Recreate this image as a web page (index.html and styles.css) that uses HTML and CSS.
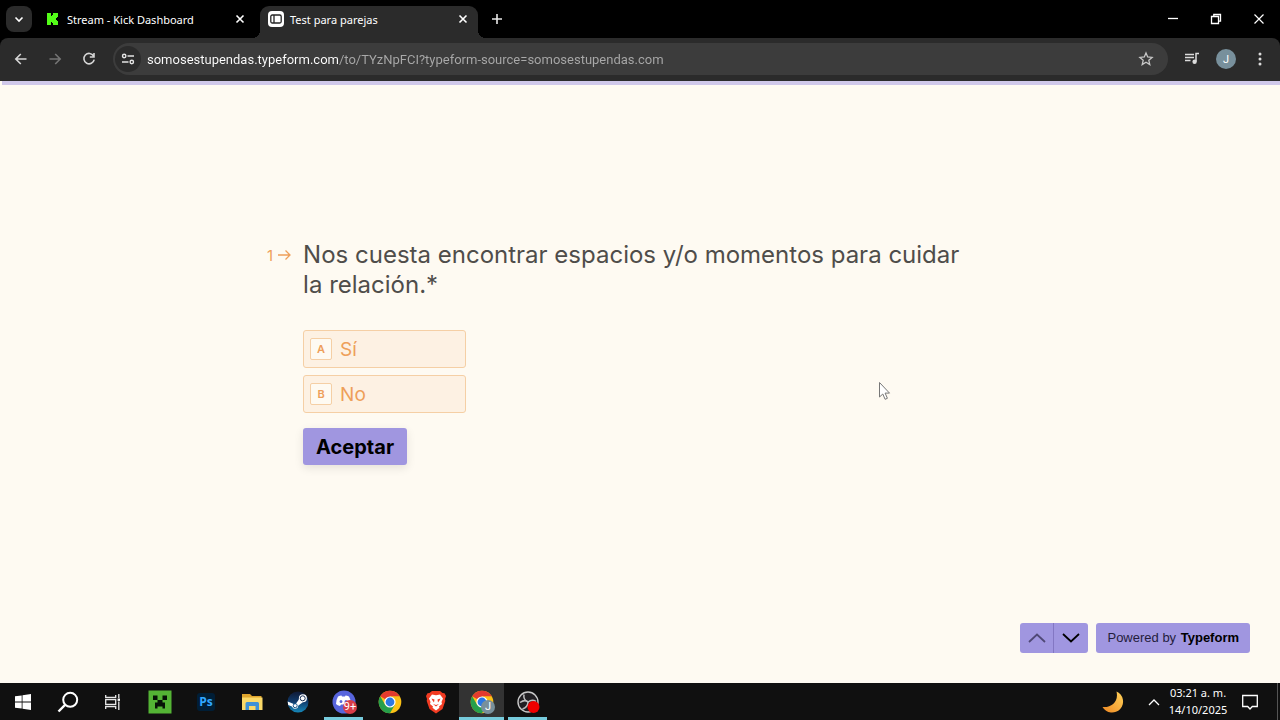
FILE: index.html
```html
<!DOCTYPE html>
<html lang="es">

<head>
  <meta charset="UTF-8">
  <meta name="viewport" content="width=device-width, initial-scale=1.0">
  <title>Test para parejas</title>
  <link rel="stylesheet" href="styles.css">
</head>

<body>
  <header class="browser">
    <div class="tab-strip">
      <button class="tab-search" aria-label="Buscar pestañas">
        <svg width="10" height="10" viewBox="0 0 10 10"><path d="M1.500 3.500l3.500 3.500 3.500-3.500" fill="none" stroke="#fff" stroke-width="1.6"/></svg>
      </button>
      <div class="tab">
        <svg class="tab-icon" width="16" height="16" viewBox="0 0 16 16"><path d="M2 2h4v3h1V4h1V2h5v4h-1v1h-1v2h1v1h1v4H8v-2H7v-1H6v3H2z" fill="#53fc18"/></svg>
        <span class="tab-title">Stream - Kick Dashboard</span>
        <button class="tab-close" aria-label="Cerrar pestaña">
          <svg width="10" height="10" viewBox="0 0 10 10"><path d="M1.5 1.5l7 7m0-7l-7 7" stroke="#fff" stroke-width="1.6"/></svg>
        </button>
      </div>
      <div class="tab tab-active">
        <svg class="tab-icon" width="16" height="16" viewBox="0 0 16 16"><rect width="16" height="16" rx="4" fill="#fff"/><rect x="2.800" y="4" width="10.400" height="8" rx="1.500" fill="none" stroke="#262626" stroke-width="1.300"/><path d="M6 4v8" stroke="#262626" stroke-width="1.300"/></svg>
        <span class="tab-title">Test para parejas</span>
        <button class="tab-close" aria-label="Cerrar pestaña">
          <svg width="10" height="10" viewBox="0 0 10 10"><path d="M1.5 1.5l7 7m0-7l-7 7" stroke="#fff" stroke-width="1.6"/></svg>
        </button>
      </div>
      <button class="new-tab" aria-label="Nueva pestaña">
        <svg width="12" height="12" viewBox="0 0 12 12"><path d="M6 1v10M1 6h10" stroke="#e8e8e8" stroke-width="1.6"/></svg>
      </button>
      <div class="window-buttons">
        <button aria-label="Minimizar"><svg width="12" height="12" viewBox="0 0 12 12"><path d="M1 5.5h10" stroke="#fff" stroke-width="1.3"/></svg></button>
        <button aria-label="Restaurar"><svg width="12" height="12" viewBox="0 0 12 12"><path d="M1.5 3.5h7v7h-7zM3.8 3V1.5h6.7v6.7H9" fill="none" stroke="#fff" stroke-width="1.3"/></svg></button>
        <button aria-label="Cerrar"><svg width="12" height="12" viewBox="0 0 12 12"><path d="M1.5 1.5l9 9m0-9l-9 9" stroke="#fff" stroke-width="1.2"/></svg></button>
      </div>
    </div>

    <div class="toolbar">
      <nav class="nav-buttons">
        <button aria-label="Atrás"><svg width="16" height="16" viewBox="0 0 16 16"><path d="M13.5 8H3m4.8-5L2.8 8l5 5" fill="none" stroke="#d6d6d6" stroke-width="1.6"/></svg></button>
        <button aria-label="Adelante"><svg width="16" height="16" viewBox="0 0 16 16"><path d="M2.5 8H13M8.2 3l5 5-5 5" fill="none" stroke="#757575" stroke-width="1.6"/></svg></button>
        <button aria-label="Recargar"><svg width="16" height="16" viewBox="0 0 16 16"><path d="M12.6 5A5.2 5.2 0 1 0 13.2 8.6M13 2v4H8.8" fill="none" stroke="#d6d6d6" stroke-width="1.6"/></svg></button>
      </nav>
      <div class="address">
        <button class="site-info" aria-label="Información del sitio">
          <svg width="14" height="14" viewBox="0 0 14 14" fill="none" stroke="#e4e4e4" stroke-width="1.4"><circle cx="3.2" cy="4" r="1.7"/><path d="M6.5 4H13M1 10h6.5"/><circle cx="10.8" cy="10" r="1.7"/></svg>
        </button>
        <input class="url" type="text" aria-label="Dirección" value="somosestupendas.typeform.com/to/TYzNpFCI?typeform-source=somosestupendas.com">
        <button class="bookmark" aria-label="Añadir a marcadores">
          <svg width="16" height="16" viewBox="0 0 16 16"><path d="M8 2l1.7 4 4.4.4-3.3 2.9 1 4.3L8 11.300l-3.800 2.300 1-4.300L1.900 6.400 6.300 6z" fill="none" stroke="#c8c8c8" stroke-width="1.3"/></svg>
        </button>
      </div>
      <button class="media" aria-label="Control multimedia">
        <svg width="16" height="16" viewBox="0 0 16 16"><path d="M1 3.500h9M1 6.500h9M1 9.500h5.500M12 10.500v-8h3" fill="none" stroke="#dcdcdc" stroke-width="1.500"/><circle cx="10.600" cy="10.800" r="2.200" fill="#dcdcdc"/></svg>
      </button>
      <button class="profile" aria-label="Perfil">J</button>
      <button class="more" aria-label="Más opciones">
        <svg width="4" height="14" viewBox="0 0 4 14" fill="#dcdcdc"><circle cx="2" cy="2" r="1.500"/><circle cx="2" cy="7" r="1.500"/><circle cx="2" cy="12" r="1.500"/></svg>
      </button>
    </div>
  </header>

  <main class="page">
    <div class="progress"></div>

    <form class="question">
      <div class="question-number">
        <span>1</span>
        <svg width="13" height="12" viewBox="0 0 13 12"><path d="M0 6h12M7.500 1.500L12 6l-4.500 4.500" fill="none" stroke="#ee9f5a" stroke-width="1.300"/></svg>
      </div>
      <div class="question-body">
        <h1 class="question-title">Nos cuesta encontrar espacios y/o momentos para cuidar la relación.*</h1>
        <div class="choices">
          <label class="choice">
            <input type="radio" name="answer" value="si">
            <span class="key">A</span>
            <span>Sí</span>
          </label>
          <label class="choice">
            <input type="radio" name="answer" value="no">
            <span class="key">B</span>
            <span>No</span>
          </label>
        </div>
        <button class="submit" type="button">Aceptar</button>
      </div>
    </form>

    <footer class="form-footer">
      <div class="steps">
        <button class="step step-prev" aria-label="Anterior"><svg width="18" height="10" viewBox="0 0 18 10"><path d="M1 9l8-7.500L17 9" fill="none" stroke="#1b1530" stroke-width="1.800"/></svg></button>
        <button class="step" aria-label="Siguiente"><svg width="18" height="10" viewBox="0 0 18 10"><path d="M1 1l8 7.500L17 1" fill="none" stroke="#000" stroke-width="1.800"/></svg></button>
      </div>
      <a class="powered" href="#">Powered by <b>Typeform</b></a>
    </footer>

    <svg class="cursor" width="13" height="20" viewBox="0 0 13 20"><path d="M1.500 1.500v14.500l3.300-3 2.300 5.300 2.300-1-2.300-5.200h4.400z" fill="#fff" stroke="#777" stroke-width="1"/></svg>
  </main>

  <div class="taskbar">
    <div class="system-buttons">
      <button aria-label="Inicio">
        <svg width="16" height="16" viewBox="0 0 16 16" fill="#fff"><path d="M0 2.300l6.700-.9v6.200H0zM7.500 1.300L16 0v7.600H7.500zM0 8.400h6.700v6.200L0 13.700zM7.500 8.400H16V16l-8.500-1.200z"/></svg>
      </button>
      <button aria-label="Buscar">
        <svg width="22" height="22" viewBox="0 0 22 22"><circle cx="13.200" cy="8.800" r="7" fill="none" stroke="#fff" stroke-width="2"/><path d="M8.300 13.700L1.500 20.500" stroke="#fff" stroke-width="2.400"/></svg>
      </button>
      <button aria-label="Vista de tareas">
        <svg width="16" height="16" viewBox="0 0 16 16" fill="none" stroke="#e8e8e8" stroke-width="1.300"><path d="M.7 1v2.300h10V1M.7 15v-2.300h10V15M.7 5.500h10v5H.7zM13.800 0v4M13.800 7.500V16"/><rect x="12.600" y="4.500" width="2.400" height="2.400" fill="#fff" stroke="none"/></svg>
      </button>
    </div>
    <div class="apps">
      <button class="app" aria-label="Minecraft">
        <svg width="24" height="24" viewBox="0 0 24 24"><path d="M.5.5h23v23H.5z" fill="#54b435"/><path d="M5 5.500h4.500V10H5zM14.500 5.500H19V10h-4.500zM9.500 10h5v2.500H17v6h-2.500V16.500h-5v2H7v-6h2.500z" fill="#071307"/></svg>
      </button>
      <button class="app" aria-label="Photoshop">
        <svg width="20" height="20" viewBox="0 0 20 20"><rect x="1" y="1" width="18" height="18" rx="3" fill="#001e36"/><text x="10" y="14" class="ps-text">Ps</text></svg>
      </button>
      <button class="app" aria-label="Explorador de archivos">
        <svg width="22" height="20" viewBox="0 0 22 20"><path d="M1 2h8l2 2h9.500v14H1z" fill="#dfa52d"/><path d="M1 5.500h20.500V18H1z" fill="#fad968"/><path d="M4.500 18v-6.500q0-1.500 1.500-1.500h10.500q1.500 0 1.500 1.500V18h-3.500v-4h-6.500v4z" fill="#3e91d6"/></svg>
      </button>
      <button class="app" aria-label="Steam">
        <svg width="22" height="22" viewBox="0 0 22 22"><defs><linearGradient id="steam" x1="0" y1="0" x2="0" y2="1"><stop offset="0" stop-color="#101a35"/><stop offset=".5" stop-color="#103c6d"/><stop offset="1" stop-color="#1688b9"/></linearGradient></defs><circle cx="11" cy="11" r="10.500" fill="url(#steam)"/><path d="M.7 10.500l6 2.400 2 .1 3-4.200.2-1.500a4 4 0 1 1 4 4l-4.500 3.300A3.300 3.300 0 0 1 5 15.600l-3.800-1.500z" fill="#fff"/><circle cx="15.700" cy="7.300" r="2.500" fill="none" stroke="#1a3155" stroke-width="1"/><circle cx="8.200" cy="14.700" r="2" fill="none" stroke="#16568a"/></svg>
      </button>
      <button class="app app-open" aria-label="Discord">
        <svg width="24" height="24" viewBox="0 0 24 24"><circle cx="12" cy="12" r="11.500" fill="#5865dd"/><path d="M6 6.500Q8 5.500 9.500 5.500l.5 1h3l.5-1q1.500 0 3.500 1 2 3.500 2 7.500-1.500 1.500-4 2l-1-1.500h-5L8 16q-2.500-.5-4-2 0-4 2-7.500z" fill="#fff"/><ellipse cx="9" cy="11.500" rx="1.400" ry="1.600" fill="#5865dd"/><ellipse cx="14" cy="11.500" rx="1.400" ry="1.600" fill="#5865dd"/></svg>
        <span class="badge badge-red">9+</span>
      </button>
      <button class="app" aria-label="Chrome">
        <svg width="24" height="24" viewBox="0 0 24 24"><circle cx="12" cy="12" r="11.300" fill="#fbc116"/><path d="M12 12L2.200 6.350A11.300 11.300 0 0 1 21.800 6.350H12z" fill="#e33b2e"/><path d="M2.200 6.350A11.300 11.300 0 0 0 12 23.300l4.900-8.500L12 12 7.100 14.800z" fill="#269f4b"/><circle cx="12" cy="12" r="5.600" fill="#fff"/><circle cx="12" cy="12" r="4.400" fill="#2b78e4"/></svg>
      </button>
      <button class="app" aria-label="Brave">
        <svg width="20" height="24" viewBox="0 0 20 24"><path d="M6 1h8l2.500 2 2 .2L20 6l-1 3 .3 2-2.800 8L10 23.500 3.500 19 .7 11 1 9 0 6l1.500-2.800 2-.2z" fill="#f13b22"/><path d="M6 4.500l4 .8 4-.8 3 4-1.500 3.500.5 2-3 2.500.5 1.300-3.500 2.700-3.500-2.700.5-1.300-3-2.500.5-2L3 8.500z" fill="#fff"/><path d="M5.500 8.500l3 1-.5 3-1.500-2zM14.500 8.500l-3 1 .5 3 1.500-2zM7 14l3 1 3-1-3 2.500z" fill="#f13b22"/></svg>
      </button>
      <button class="app app-open app-active" aria-label="Chrome, Test para parejas">
        <svg width="24" height="24" viewBox="0 0 24 24"><circle cx="12" cy="12" r="11.300" fill="#fbc116"/><path d="M12 12L2.200 6.350A11.300 11.300 0 0 1 21.800 6.350H12z" fill="#e33b2e"/><path d="M2.200 6.350A11.300 11.300 0 0 0 12 23.300l4.900-8.500L12 12 7.100 14.800z" fill="#269f4b"/><circle cx="12" cy="12" r="5.600" fill="#fff"/><circle cx="12" cy="12" r="4.400" fill="#2b78e4"/></svg>
        <span class="badge badge-gray">J</span>
      </button>
      <button class="app app-open" aria-label="OBS Studio">
        <svg width="24" height="24" viewBox="0 0 24 24"><circle cx="12" cy="12" r="10" fill="#211f22" stroke="#c9c9c9" stroke-width="1.400"/><g fill="none" stroke="#bdbdbd" stroke-width="1.500"><path d="M8 4.500q-1 5 4 7.500 4-3 8-.5"/><path d="M12 12q0 5-5.500 7M12 12Q9 9 4 12.500"/></g><circle cx="17.500" cy="17" r="6" fill="#f00000"/></svg>
      </button>
    </div>
    <div class="tray">
      <svg width="22" height="22" viewBox="0 0 22 22"><defs><linearGradient id="moon" x1="1" y1="0" x2="0" y2="1"><stop offset="0" stop-color="#ffd35a"/><stop offset="1" stop-color="#ee8722"/></linearGradient></defs><path d="M14.500.5A11 11 0 1 1 .5 16C9 17 17 11 14.500.5z" fill="url(#moon)"/></svg>
      <button class="tray-more" aria-label="Mostrar iconos ocultos"><svg width="12" height="8" viewBox="0 0 12 8"><path d="M1 7l5-5 5 5" fill="none" stroke="#fff" stroke-width="1.300"/></svg></button>
      <div class="clock">
        <time>03:21 a. m.</time>
        <time>14/10/2025</time>
      </div>
      <button aria-label="Notificaciones"><svg width="16" height="16" viewBox="0 0 16 16"><path d="M.7 1.500h14.600v11h-5L8 15l-2.300-2.500h-5z" fill="none" stroke="#fff" stroke-width="1.300"/></svg></button>
      <div class="show-desktop"></div>
    </div>
  </div>
</body>

</html>
```
FILE: styles.css
```css
html {
  box-sizing: border-box;
}

*,
*::before,
*::after {
  box-sizing: inherit;
}

body {
  display: flex;
  flex-direction: column;
  min-height: 100vh;
  margin: 0;
  background-color: #000;
  font-family: "Noto Sans", "Open Sans", sans-serif;
}

button {
  display: flex;
  align-items: center;
  justify-content: center;
  padding: 0;
  border: 0;
  background: none;
  color: inherit;
  font-family: inherit;
  cursor: pointer;
}

svg {
  display: block;
  flex-shrink: 0;
}

/* Browser */

.tab-strip {
  display: flex;
  align-items: center;
  height: 38px;
  padding-left: 6px;
  color: #fff;
}

.tab-search {
  width: 26px;
  height: 26px;
  border-radius: 8px;
  background-color: #2b2b2b;
}

.tab {
  display: flex;
  align-items: center;
  width: 218px;
  height: 32px;
  padding: 0 8px;
  margin-left: 5px;
}

.tab-icon {
  margin-right: 6px;
}

.tab-title {
  flex: 1;
  font-size: 11px;
  white-space: nowrap;
}

.tab-close {
  width: 14px;
  height: 14px;
}

.tab-active {
  position: relative;
  align-self: flex-end;
  padding-bottom: 6px;
  border-radius: 9px 9px 0 0;
  background-color: #2b2b2b;
}

.tab-active::before,
.tab-active::after {
  content: "";
  position: absolute;
  bottom: 0;
  width: 8px;
  height: 8px;
}

.tab-active::before {
  right: 100%;
  background: radial-gradient(circle at 0 0, transparent 8px, #2b2b2b 8px);
}

.tab-active::after {
  left: 100%;
  background: radial-gradient(circle at 100% 0, transparent 8px, #2b2b2b 8px);
}

.new-tab {
  width: 24px;
  height: 24px;
  margin-left: 7px;
}

.window-buttons {
  display: flex;
  margin-left: auto;
}

.window-buttons button {
  width: 43px;
  height: 38px;
}

.toolbar {
  display: flex;
  align-items: center;
  height: 43px;
  padding: 0 8px 1px 4px;
  border-radius: 8px 8px 0 0;
  background-color: #2b2b2b;
}

.nav-buttons {
  display: flex;
}

.nav-buttons button {
  width: 34px;
  height: 32px;
}

.address {
  display: flex;
  flex: 1;
  align-items: center;
  height: 32px;
  padding: 0 12px 0 2px;
  margin: 0 12px 0 7px;
  border-radius: 16px;
  background-color: #3c3c3c;
}

.site-info {
  width: 26px;
  height: 26px;
  border-radius: 50%;
  background-color: #2b2b2b;
}

/* The host is white, the rest of the address is gray */
.url {
  flex: 1;
  min-width: 0;
  padding: 0;
  margin-left: 6px;
  border: 0;
  outline: 0;
  background: linear-gradient(to right, #fff 192px, #a9a9a9 192px);
  background-clip: text;
  -webkit-background-clip: text;
  color: transparent;
  font-family: Roboto, "Noto Sans", sans-serif;
  font-size: 13px;
}

.bookmark {
  width: 20px;
  height: 24px;
}

.media {
  width: 24px;
  height: 24px;
}

.profile {
  width: 20px;
  height: 20px;
  margin: 0 12px;
  border-radius: 50%;
  background-color: #78909c;
  color: #fff;
  font-family: Roboto, sans-serif;
  font-size: 11px;
}

.more {
  width: 24px;
  height: 24px;
}

/* Form */

.page {
  position: relative;
  display: flex;
  flex: 1;
  flex-direction: column;
  background-color: #fefaf2;
}

.progress {
  height: 4px;
  margin-left: 2px;
  background-color: #d0c8ea;
}

.question {
  display: flex;
  flex: 1;
  gap: 12px;
  width: 100%;
  max-width: 746px;
  padding: 155px 36px 0 0;
  margin: 0 auto;
  font-family: Inter, "Open Sans", sans-serif;
}

.question-number {
  display: flex;
  align-items: center;
  gap: 5px;
  height: 30px;
  color: #ee9f5a;
  font-size: 15px;
}

.question-title {
  margin: 0 0 30px;
  color: #4f4d4a;
  font-size: 24px;
  font-weight: 400;
  line-height: 30px;
}

.choices {
  display: flex;
  flex-direction: column;
  gap: 7px;
  width: 163px;
}

.choice {
  position: relative;
  display: flex;
  align-items: center;
  gap: 8px;
  height: 38px;
  padding: 0 6px;
  border: 1px solid #f5cfa5;
  border-radius: 3px;
  background-color: #fdf1e3;
  color: #ee9f5a;
  font-size: 19px;
  cursor: pointer;
}

.choice input {
  position: absolute;
  inset: 0;
  width: 100%;
  height: 100%;
  margin: 0;
  opacity: 0;
  cursor: pointer;
}

.key {
  width: 22px;
  height: 22px;
  border: 1px solid #f5cfa5;
  border-radius: 2px;
  background-color: #fefaf2;
  font-size: 11px;
  font-weight: 600;
  line-height: 20px;
  text-align: center;
}

.submit {
  height: 37px;
  padding: 0 13px;
  margin-top: 15px;
  border-radius: 3px;
  background-color: #a096e0;
  box-shadow: 0 3px 10px rgb(0 0 0 / 0.1);
  color: #000;
  font-size: 20px;
  font-weight: 700;
}

.form-footer {
  display: flex;
  justify-content: flex-end;
  gap: 8px;
  padding: 0 30px;
  margin-bottom: 30px;
}

.steps {
  display: flex;
  overflow: hidden;
  border-radius: 3px;
}

.step {
  width: 34px;
  height: 30px;
  background-color: #a096e0;
}

.step-prev {
  border-right: 1px solid #8377c3;
}

.step-prev svg {
  opacity: 0.6;
}

.powered {
  padding: 0 11px;
  border-radius: 3px;
  background-color: #a096e0;
  color: #241d3c;
  font-family: "Liberation Sans", Arial, sans-serif;
  font-size: 13px;
  line-height: 30px;
  text-decoration: none;
}

.powered b {
  margin-left: 1px;
  color: #000;
}

.cursor {
  position: absolute;
  top: 300px;
  left: 878px;
  pointer-events: none;
}

/* Taskbar */

.taskbar {
  display: flex;
  height: 37px;
  background-color: #101010;
  color: #fff;
}

.system-buttons,
.apps,
.tray {
  display: flex;
  align-items: center;
}

.system-buttons button {
  width: 45px;
  height: 37px;
}

.apps {
  gap: 1px;
  margin-left: 2px;
}

.app {
  position: relative;
  width: 45px;
  height: 37px;
}

.app-open::after {
  content: "";
  position: absolute;
  right: 3px;
  bottom: 0;
  left: 3px;
  height: 3px;
  background-color: #76cbdc;
}

.app-active {
  background-color: #333;
}

.app-active::after {
  right: 0;
  left: 0;
}

.ps-text {
  fill: #31a8ff;
  font-family: "Open Sans", sans-serif;
  font-size: 12px;
  font-weight: 700;
  text-anchor: middle;
}

.badge {
  position: absolute;
  right: 9px;
  bottom: 6px;
  width: 14px;
  height: 14px;
  border-radius: 50%;
  color: #fff;
  font-family: Roboto, sans-serif;
  font-size: 11px;
  line-height: 14px;
}

.badge-red {
  background-color: #d83c48;
}

.badge-gray {
  background-color: #78909c;
}

.tray {
  margin-left: auto;
}

.tray-more {
  width: 24px;
  height: 37px;
  margin-left: 18px;
}

.clock {
  display: flex;
  flex-direction: column;
  width: 64px;
  padding-bottom: 2px;
  font-size: 11px;
  line-height: 17px;
  text-align: center;
}

.clock + button {
  width: 40px;
  height: 37px;
}

.show-desktop {
  width: 8px;
  height: 37px;
  border-right: 1px solid #555;
  margin-right: 2px;
}
```
